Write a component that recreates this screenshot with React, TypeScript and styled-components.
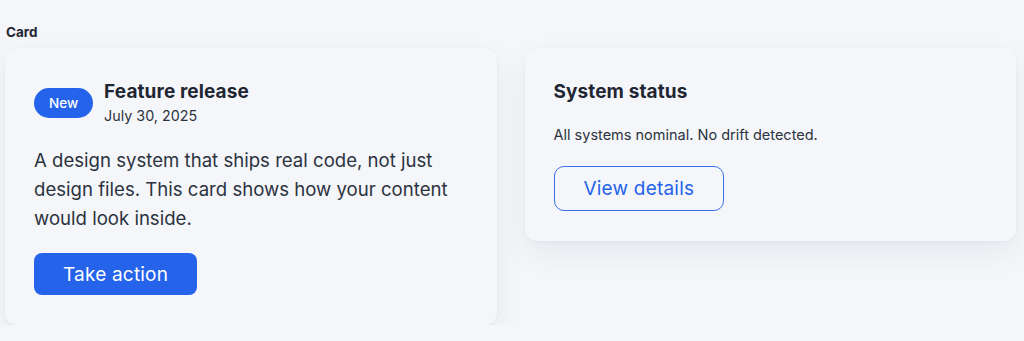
import styled, { createGlobalStyle } from 'styled-components'

const GlobalStyle = createGlobalStyle`
  html, body {
    margin: 0;
    padding: 0;
    background: #f5f6fa;
  }
  body {
    font-family: Inter, "Noto Sans", "Liberation Sans", sans-serif;
    color: #1f2633;
    -webkit-font-smoothing: antialiased;
  }
`

const Page = styled.div`
  padding: 22px 8px 0 5px;
`

const SectionLabel = styled.div`
  font-size: 13.5px;
  font-weight: 700;
  line-height: 20px;
  margin: 0 0 6px 1px;
  color: #1f2633;
`

const Grid = styled.div`
  display: grid;
  grid-template-columns: 1fr 1fr;
  gap: 28px;
  align-items: start;
`

const CardBox = styled.div`
  background: #f5f6fa;
  border-radius: 12px;
  padding: 32px 30px 30px 29px;
  box-shadow: 0 12px 32px rgba(15, 23, 42, 0.06), 0 1px 4px rgba(15, 23, 42, 0.04);
`

const Header = styled.div`
  display: flex;
  align-items: center;
  gap: 11px;
`

const Badge = styled.span`
  display: inline-flex;
  align-items: center;
  height: 30px;
  padding: 0 15px;
  border-radius: 999px;
  background: #2563eb;
  color: #fff;
  font-size: 13.5px;
  font-weight: 500;
`

const TitleBlock = styled.div`
  display: flex;
  flex-direction: column;
`

const Title = styled.div`
  font-size: 19px;
  font-weight: 700;
  line-height: 24px;
  letter-spacing: 0.1px;
  color: #1f2633;
`

const DateText = styled.div`
  font-size: 14.3px;
  line-height: 20px;
  margin-top: 2px;
  color: #2b3340;
`

const Body = styled.p<{ $size: 'lg' | 'sm' }>`
  margin: ${p => (p.$size === 'lg' ? '20px 0 20px' : '21px 0 21px')};
  font-size: ${p => (p.$size === 'lg' ? '18.6px' : '14.5px')};
  line-height: ${p => (p.$size === 'lg' ? '29px' : '20px')};
  color: #2b3340;
`

const Button = styled.button<{ $variant: 'solid' | 'outline' }>`
  font-family: inherit;
  font-size: 19px;
  letter-spacing: 0.2px;
  cursor: pointer;
  box-sizing: border-box;
  ${p =>
    p.$variant === 'solid'
      ? `
    height: 42px;
    padding: 0 29px;
    border: none;
    border-radius: 8px;
    background: #2563eb;
    color: #fff;
  `
      : `
    height: 45px;
    padding: 0 29px;
    border: 1.5px solid #3b6fea;
    border-radius: 10px;
    background: transparent;
    color: #2563eb;
  `}
`

export default function App() {
  return (
    <>
      <GlobalStyle />
      <Page>
        <SectionLabel>Card</SectionLabel>
        <Grid>
          <CardBox>
            <Header>
              <Badge>New</Badge>
              <TitleBlock>
                <Title>Feature release</Title>
                <DateText>July 30, 2025</DateText>
              </TitleBlock>
            </Header>
            <Body $size="lg">
              A design system that ships real code, not just design files. This card shows how your
              content would look inside.
            </Body>
            <Button $variant="solid">Take action</Button>
          </CardBox>
          <CardBox>
            <Title>System status</Title>
            <Body $size="sm">All systems nominal. No drift detected.</Body>
            <Button $variant="outline">View details</Button>
          </CardBox>
        </Grid>
      </Page>
    </>
  )
}
